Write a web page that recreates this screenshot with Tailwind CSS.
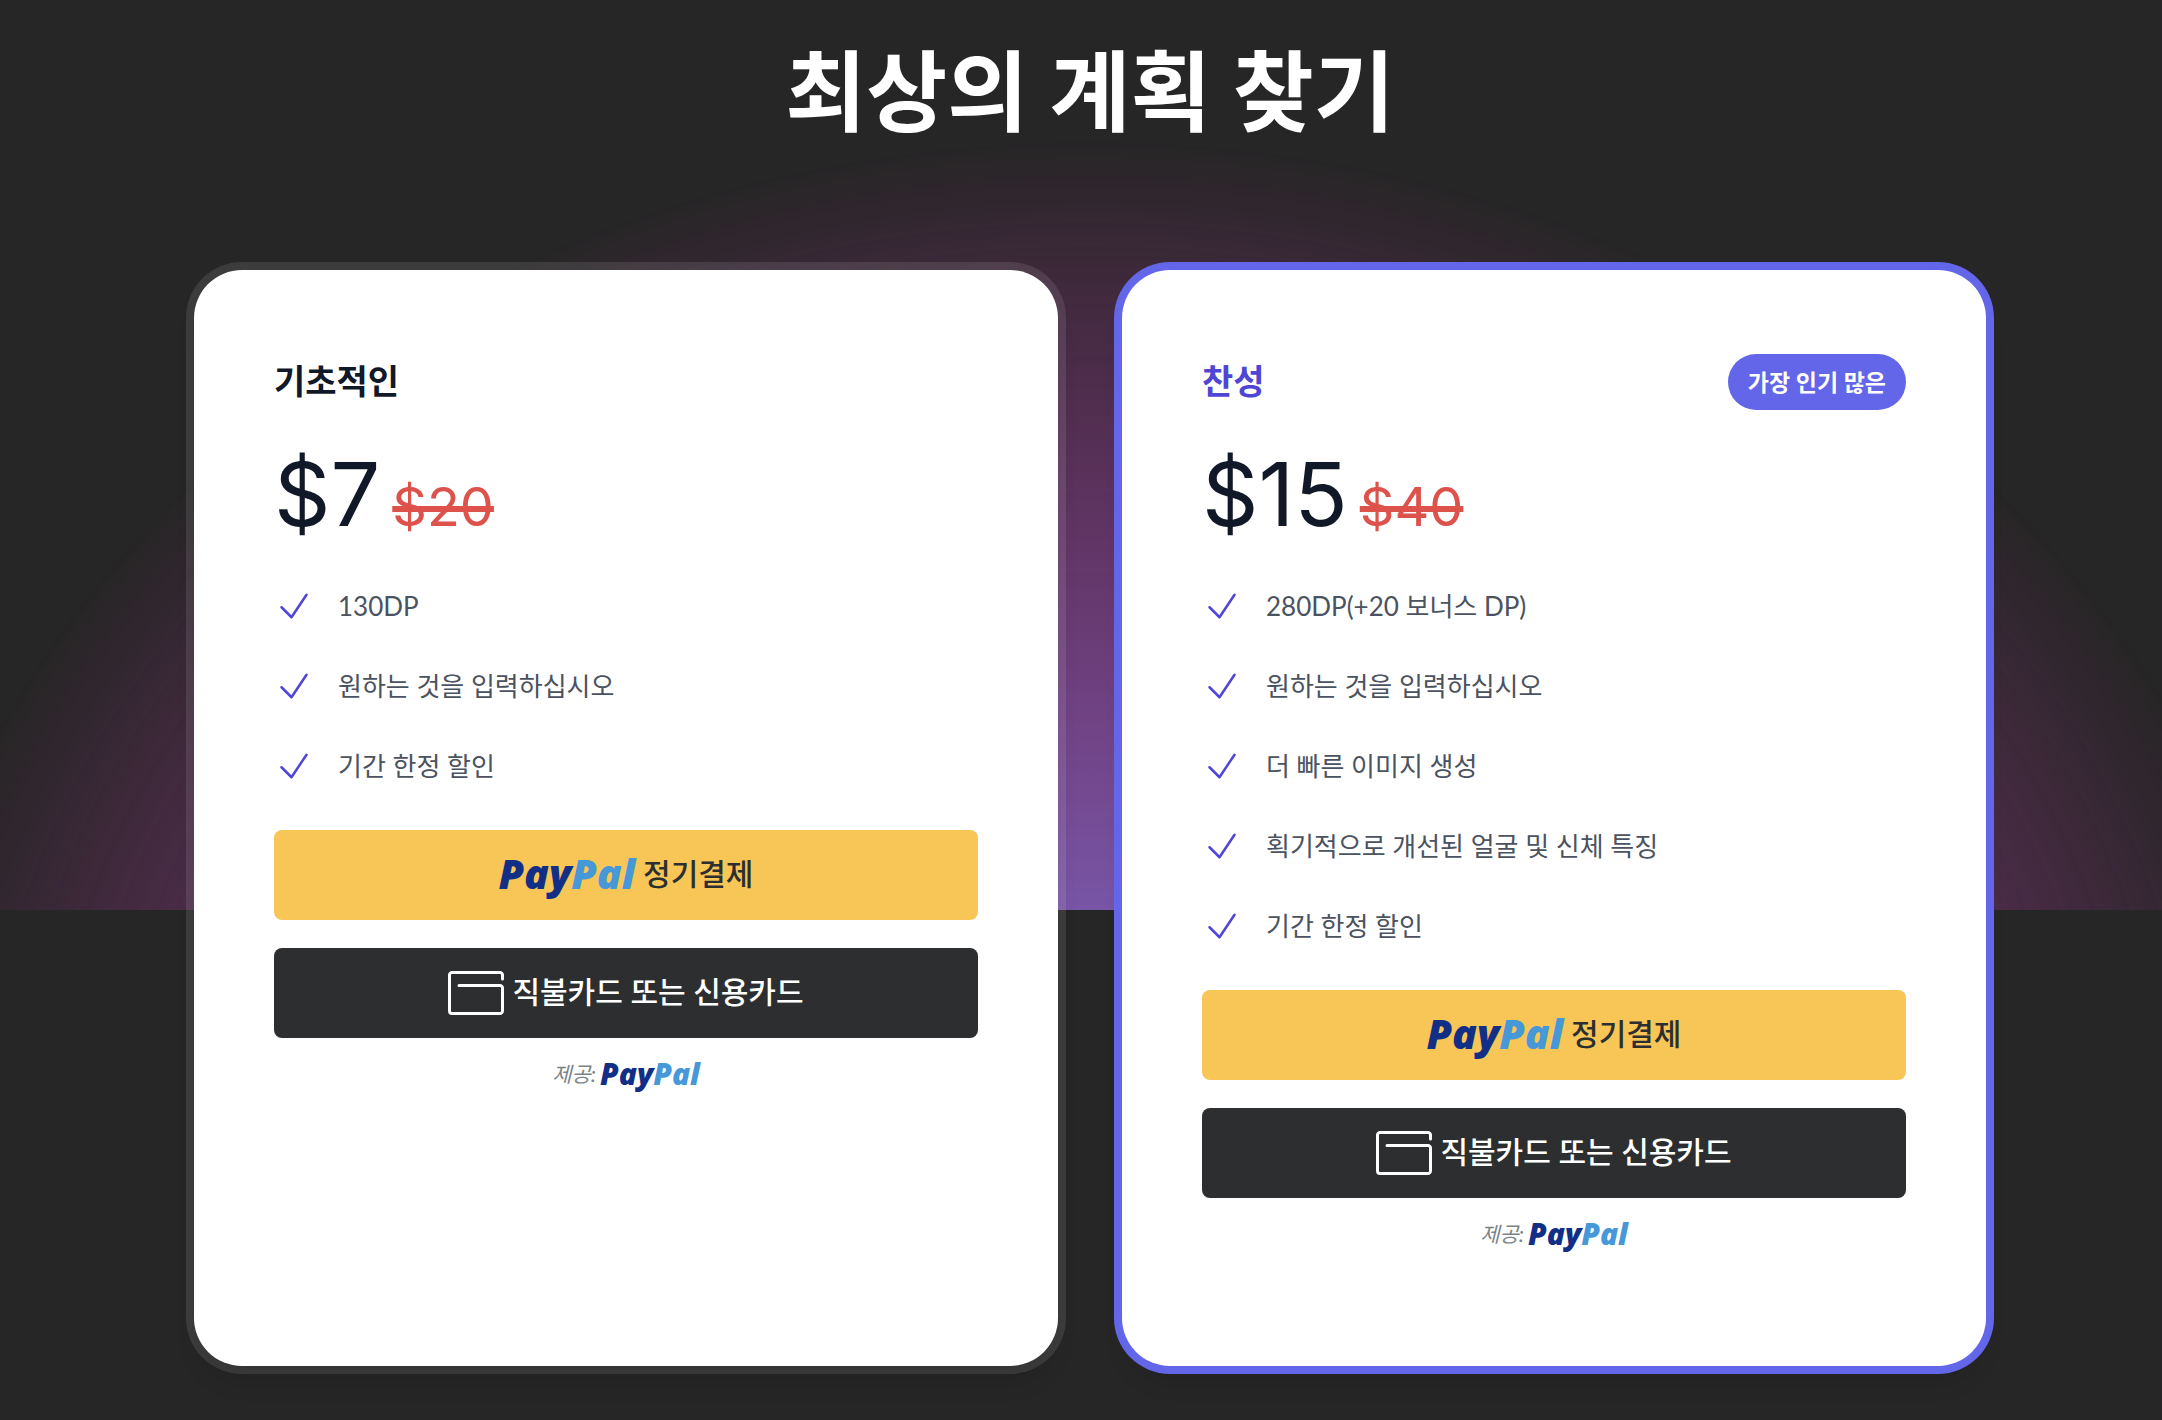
<!DOCTYPE html>
<html lang="ko">
<head>
<meta charset="utf-8">
<meta name="viewport" content="width=device-width, initial-scale=1">
<title>최상의 계획 찾기</title>
<script src="https://cdn.jsdelivr.net/npm/@tailwindcss/browser@4"></script>
</head>
<body class="bg-[#262626] font-['Lato','Noto_Sans_CJK_KR',sans-serif]">
<svg class="hidden" aria-hidden="true">
  <symbol id="check" viewBox="0 0 24 24"><path d="M4.5 12.75l6 6 9-13.5" fill="none" stroke="currentColor" stroke-width="1.5" stroke-linecap="round" stroke-linejoin="round"/></symbol>
  <symbol id="card" viewBox="0 0 56 44"><path d="M54.500 8V4a2.500 2.500 0 0 0-2.500-2.500H4A2.500 2.500 0 0 0 1.500 4v36A2.500 2.500 0 0 0 4 42.500h48a2.500 2.500 0 0 0 2.500-2.500V17a2.500 2.500 0 0 0-2.500-2.500H11" fill="none" stroke="currentColor" stroke-width="3" stroke-linecap="round" stroke-linejoin="round"/></symbol>
</svg>
<main class="pb-13">
  <header class="relative isolate overflow-hidden pt-[42px] pb-[772px] pl-[18px] text-center">
    <h1 class="text-[88px] leading-24 font-bold text-white">최상의 계획 찾기</h1>
    <svg viewBox="0 0 1208 1024" aria-hidden="true" class="absolute top-[140px] left-[calc(50%+9px)] -z-10 h-[2048px] w-[2416px] max-w-none -translate-x-1/2 [mask-image:radial-gradient(closest-side,white,transparent)]">
      <ellipse cx="604" cy="512" rx="604" ry="512" fill="url(#glow)"/>
      <defs>
        <radialGradient id="glow">
          <stop stop-color="#7775D6"/>
          <stop offset="1" stop-color="#E935C1"/>
        </radialGradient>
      </defs>
    </svg>
  </header>

  <div class="relative -mt-[640px] pl-[18px]">
    <div class="mx-auto grid max-w-[1792px] grid-cols-2 gap-16">

      <section class="rounded-[48px] bg-white p-20 shadow-xl ring-8 ring-white/10">
        <div class="flex h-16 items-center justify-between">
          <h2 class="pb-1 text-[34px] font-bold text-[#111827]">기초적인</h2>
        </div>
        <p class="mt-8 flex items-baseline gap-3 font-['Inter',sans-serif]">
          <span class="text-[88px] leading-24 text-[#111827]">$7</span>
          <del class="text-[54px] leading-none text-[#de524c] decoration-[6px]">$20</del>
        </p>
        <ul class="mt-10 space-y-8 text-[26px] leading-12 text-[#4b5260]">
          <li class="flex items-center gap-6"><svg class="size-10 text-[#4f46d4]"><use href="#check"/></svg>130DP</li>
          <li class="flex items-center gap-6"><svg class="size-10 text-[#4f46d4]"><use href="#check"/></svg>원하는 것을 입력하십시오</li>
          <li class="flex items-center gap-6"><svg class="size-10 text-[#4f46d4]"><use href="#check"/></svg>기간 한정 할인</li>
        </ul>
        <button type="button" class="mt-10 flex h-[90px] w-full items-center justify-center gap-2 rounded-lg bg-[#f7c657] pb-1 text-[30px] font-medium text-[#2c2e2f]">
          <span class="font-['Open_Sans',sans-serif] text-[41px] leading-none font-extrabold text-[#4698d8] italic"><span class="text-[#112f86]">Pay</span>Pal</span>
          정기결제
        </button>
        <button type="button" class="mt-7 flex h-[90px] w-full items-center justify-center gap-2 rounded-lg bg-[#2c2e2f] pb-1 text-[30px] font-medium text-white">
          <svg class="mt-1 h-11 w-14"><use href="#card"/></svg>
          직불카드 또는 신용카드
        </button>
        <p class="mt-4 flex h-10 items-center justify-center gap-1 text-[21px] text-[#7b8388] italic">
          제공:
          <span class="font-['Open_Sans',sans-serif] text-[30px] leading-none font-extrabold text-[#4698d8]"><span class="text-[#112f86]">Pay</span>Pal</span>
        </p>
      </section>

      <section class="rounded-[48px] bg-white p-20 shadow-xl ring-8 ring-[#6366e8]">
        <div class="flex h-16 items-center justify-between">
          <h2 class="pb-1 text-[34px] font-bold text-[#4f46d4]">찬성</h2>
          <span class="rounded-full bg-[#6366e8] px-5 py-2 text-[23px] leading-10 font-bold text-white">가장 인기 많은</span>
        </div>
        <p class="mt-8 flex items-baseline gap-3 font-['Inter',sans-serif]">
          <span class="text-[88px] leading-24 text-[#111827]">$15</span>
          <del class="text-[54px] leading-none text-[#de524c] decoration-[6px]">$40</del>
        </p>
        <ul class="mt-10 space-y-8 text-[26px] leading-12 text-[#4b5260]">
          <li class="flex items-center gap-6"><svg class="size-10 text-[#4f46d4]"><use href="#check"/></svg>280DP(+20 보너스 DP)</li>
          <li class="flex items-center gap-6"><svg class="size-10 text-[#4f46d4]"><use href="#check"/></svg>원하는 것을 입력하십시오</li>
          <li class="flex items-center gap-6"><svg class="size-10 text-[#4f46d4]"><use href="#check"/></svg>더 빠른 이미지 생성</li>
          <li class="flex items-center gap-6"><svg class="size-10 text-[#4f46d4]"><use href="#check"/></svg>획기적으로 개선된 얼굴 및 신체 특징</li>
          <li class="flex items-center gap-6"><svg class="size-10 text-[#4f46d4]"><use href="#check"/></svg>기간 한정 할인</li>
        </ul>
        <button type="button" class="mt-10 flex h-[90px] w-full items-center justify-center gap-2 rounded-lg bg-[#f7c657] pb-1 text-[30px] font-medium text-[#2c2e2f]">
          <span class="font-['Open_Sans',sans-serif] text-[41px] leading-none font-extrabold text-[#4698d8] italic"><span class="text-[#112f86]">Pay</span>Pal</span>
          정기결제
        </button>
        <button type="button" class="mt-7 flex h-[90px] w-full items-center justify-center gap-2 rounded-lg bg-[#2c2e2f] pb-1 text-[30px] font-medium text-white">
          <svg class="mt-1 h-11 w-14"><use href="#card"/></svg>
          직불카드 또는 신용카드
        </button>
        <p class="mt-4 mb-8 flex h-10 items-center justify-center gap-1 text-[21px] text-[#7b8388] italic">
          제공:
          <span class="font-['Open_Sans',sans-serif] text-[30px] leading-none font-extrabold text-[#4698d8]"><span class="text-[#112f86]">Pay</span>Pal</span>
        </p>
      </section>

    </div>
  </div>
</main>
</body>
</html>
